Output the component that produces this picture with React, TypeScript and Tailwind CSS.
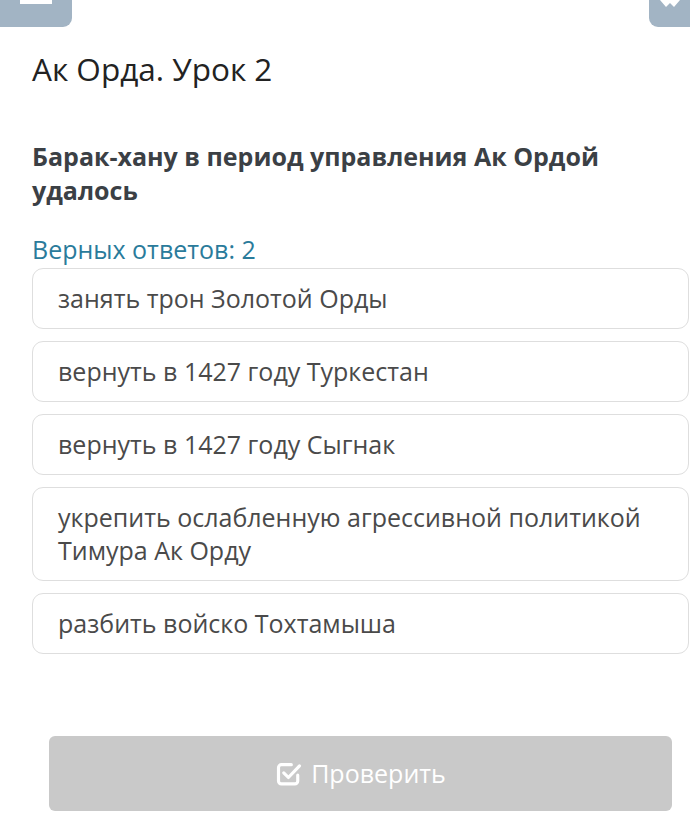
import React from 'react';

const options = [
  'занять трон Золотой Орды',
  'вернуть в 1427 году Туркестан',
  'вернуть в 1427 году Сыгнак',
  'укрепить ослабленную агрессивной политикой Тимура Ак Орду',
  'разбить войско Тохтамыша',
];

const CheckSquare: React.FC = () => (
  <svg width="28" height="28" viewBox="0 0 24 24" fill="none" stroke="white" strokeWidth="2.7" strokeLinecap="round" strokeLinejoin="round">
    <path d="M19.5 13v5A2.5 2.5 0 0 1 17 20.5H5.5A2.5 2.5 0 0 1 3 18V6.5A2.5 2.5 0 0 1 5.5 4H14" />
    <path d="M7.5 11l4 4L21 5" />
  </svg>
);

export default function App() {
  return (
    <div className="w-[690px] h-[820px] bg-white overflow-hidden" style={{ fontFamily: '"Open Sans", "Noto Sans", sans-serif' }}>
      {/* top toolbar stubs */}
      <div className="flex justify-between">
        <div className="w-[72px] h-[27px] bg-[#a2b4c4] rounded-br-[9px] flex justify-center">
          <div className="w-[32px] h-[4px] bg-white" />
        </div>
        <div className="w-[41px] h-[27px] bg-[#a2b4c4] rounded-bl-[9px] flex justify-center">
          <svg width="20" height="8" viewBox="0 0 20 8">
            <path d="M0 0 L6 7 L10 3 L14 7 L20 0 Z" fill="white" />
          </svg>
        </div>
      </div>

      <div className="pl-8 pr-px">
        <h1 className="mt-[22px] text-[31.5px] leading-[40px] text-[#222]">Ак Орда. Урок 2</h1>

        <h2 className="mt-[50px] text-[25px] leading-[34px] font-bold text-[#3b4045] pr-8">
          Барак-хану в период управления Ак Ордой удалось
        </h2>

        <div className="mt-[26px] text-[25px] leading-[33px] text-[#2a7b9b]">Верных ответов: 2</div>

        <div className="mt-[2px] flex flex-col gap-[12px]">
          {options.map((o) => (
            <div
              key={o}
              className="border border-[#dedede] rounded-[11px] px-[25px] py-[13px] text-[25px] leading-[33px] text-[#4a4a4a]"
            >
              {o}
            </div>
          ))}
        </div>

        <div className="mt-[82px] mx-[17px] h-[75px] rounded-[6px] bg-[#c9c9c9] flex items-center justify-center gap-[8px] text-white text-[25px]">
          <CheckSquare />
          <span>Проверить</span>
        </div>
      </div>
    </div>
  );
}
